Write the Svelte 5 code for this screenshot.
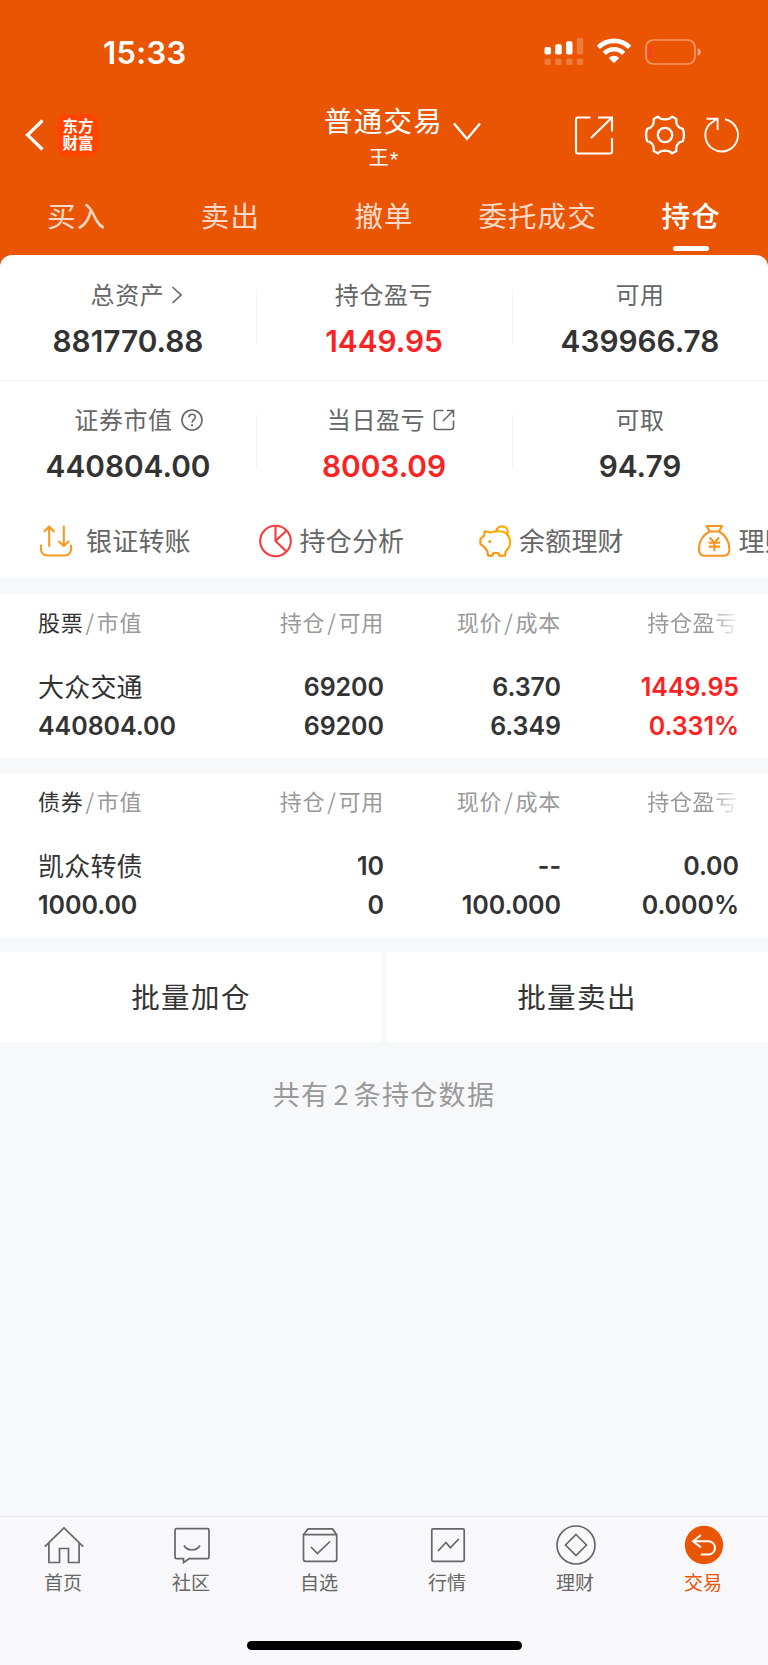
<script lang="ts">
    type Cell = { label: string; value: string; icon?: string; up?: boolean };
    type Holding = { name: string; rows: string[][]; up: boolean };

    const tabs = ['买入', '卖出', '撤单', '委托成交', '持仓'];
    let activeTab = $state(4);

    const summary: Cell[][] = [
        [
            { label: '总资产', value: '881770.88', icon: 'arrow' },
            { label: '持仓盈亏', value: '1449.95', up: true },
            { label: '可用', value: '439966.78' }
        ],
        [
            { label: '证券市值', value: '440804.00', icon: 'help' },
            { label: '当日盈亏', value: '8003.09', icon: 'open', up: true },
            { label: '可取', value: '94.79' }
        ]
    ];

    const shortcuts = [
        { icon: 'transfer', label: '银证转账' },
        { icon: 'pie', label: '持仓分析' },
        { icon: 'piggy', label: '余额理财' },
        { icon: 'bag', label: '理财' }
    ];

    const holdings: { kind: string; item: Holding }[] = [
        {
            kind: '股票',
            item: {
                name: '大众交通',
                rows: [['69200', '6.370', '1449.95'], ['440804.00', '69200', '6.349', '0.331%']],
                up: true
            }
        },
        {
            kind: '债券',
            item: {
                name: '凯众转债',
                rows: [['10', '--', '0.00'], ['1000.00', '0', '100.000', '0.000%']],
                up: false
            }
        }
    ];

    const nav = [
        { icon: 'home', label: '首页' },
        { icon: 'chat', label: '社区' },
        { icon: 'check', label: '自选' },
        { icon: 'chart', label: '行情' },
        { icon: 'coin', label: '理财' },
        { icon: 'trade', label: '交易' }
    ];
    let activeNav = $state(5);
</script>

<div class="screen">
    <header>
        <div class="status">
            <span class="time">15:33</span>
            <div class="indicators">
                <svg class="signal" width="40" height="28" viewBox="0 0 40 28" fill="#fff">
                    <rect x="0.5" y="9" width="6.5" height="7.5" rx="1.8" />
                    <rect x="11.2" y="6.3" width="6.5" height="10.2" rx="1.8" />
                    <rect x="22" y="3.3" width="6.5" height="13.2" rx="1.8" />
                    <g opacity="0.22">
                        <rect x="32.8" y="0" width="6.5" height="16.5" rx="1.8" />
                        <rect x="0.5" y="20.6" width="6.5" height="6.4" rx="2" />
                        <rect x="11.2" y="20.6" width="6.5" height="6.4" rx="2" />
                        <rect x="22" y="20.6" width="6.5" height="6.4" rx="2" />
                        <rect x="32.8" y="20.6" width="6.5" height="6.4" rx="2" />
                    </g>
                </svg>
                <svg class="wifi" width="36" height="26" viewBox="0 0 36 26" fill="none" stroke="#fff" stroke-width="4.6">
                    <path d="M2.4 9.4a22 22 0 0 1 31.2 0" />
                    <path d="M8.3 15.3a13.7 13.7 0 0 1 19.4 0" />
                    <path d="M18 25.3l-5.2-5.3a7.4 7.4 0 0 1 10.4 0z" fill="#fff" stroke="none" />
                </svg>
                <svg class="battery" width="56" height="26" viewBox="0 0 56 26" fill="none">
                    <rect x="1" y="1" width="49" height="24" rx="7.5" stroke="#fff" stroke-opacity="0.4" stroke-width="1.7" />
                    <rect x="4" y="7" width="2.6" height="12" rx="1" fill="#ff3b30" />
                    <path d="M52.6 9c2 .7 3.2 2.2 3.2 4s-1.2 3.3-3.2 4z" fill="#fff" fill-opacity="0.45" />
                </svg>
            </div>
        </div>

        <div class="titlebar">
            <div class="side">
                <svg width="20" height="32" viewBox="0 0 20 32" fill="none" stroke="#fff" stroke-width="3.2">
                    <path d="M18.5 1.5L3.5 16l15 14.5" />
                </svg>
                <div class="logo"><span>东方</span><span>财富</span></div>
            </div>
            <div class="account">
                <span class="account-type">普通交易</span>
                <span class="account-name">王<small>*</small></span>
                <svg class="account-arrow" width="28" height="20" viewBox="0 0 28 20" fill="none" stroke="#fff" stroke-width="2.4">
                    <path d="M1 1.5l13 15.5l13-15.5" />
                </svg>
            </div>
            <div class="side tools">
                <svg width="40" height="40" viewBox="0 0 40 40" fill="none" stroke="#fff" stroke-width="2.1">
                    <path d="M16.5 2.5H4a2 2 0 0 0-2 2v32a2 2 0 0 0 2 2h32a2 2 0 0 0 2-2V23M24 2.5h14v14M37.5 3L17 23" />
                </svg>
                <svg width="42" height="42" viewBox="0 0 42 42" fill="none" stroke="#fff" stroke-width="2.3" stroke-linejoin="round">
                    <path d="M14.2 2.6c2.5 3.6 11.1 3.6 13.6 0l4.6 2.4c-1 5.2 1.8 9 6.4 9.8c1.5 4 1.5 8.4 0 12.4c-4.600.8-7.400 4.600-6.400 9.800l-4.600 2.400c-2.500-3.600-11.100-3.600-13.600 0l-4.600-2.400c1-5.200-1.800-9-6.400-9.800c-1.500-4-1.500-8.400 0-12.400c4.600-.8 7.400-4.600 6.400-9.800z" />
                    <circle cx="21" cy="21" r="7.2" />
                </svg>
                <svg width="38" height="38" viewBox="0 0 38 38" fill="none" stroke="#fff" stroke-width="1.9">
                    <path d="M22 3.2A16.300 16.300 0 1 1 6.900 7.900L14 2.800M3.500 2.800H14.600V14" />
                </svg>
            </div>
        </div>

        <nav class="tabs">
            {#each tabs as tab, i}
                <button class="tab" class:active={i === activeTab} onclick={() => (activeTab = i)}>{tab}</button>
            {/each}
        </nav>
    </header>

    <section class="overview">
        {#each summary as row}
            <div class="summary-row">
                {#each row as cell}
                    <div class="summary-cell">
                        <div class="label {cell.icon ?? ''}">
                            <span>{cell.label}</span>
                            {#if cell.icon === 'arrow'}
                                <svg width="12" height="18" viewBox="0 0 12 18" fill="none" stroke="#666" stroke-width="1.7">
                                    <path d="M1.5 1l8.5 8l-8.5 8" />
                                </svg>
                            {:else if cell.icon === 'help'}
                                <svg width="22" height="22" viewBox="0 0 22 22" fill="none" stroke="#666" stroke-width="1.6">
                                    <circle cx="11" cy="11" r="10" />
                                    <path d="M7.9 8.5c0-4.300 6.400-4.300 6.400-.4c0 2.500-3.200 2.600-3.200 5.600" />
                                    <path d="M11.1 15.3v1.9" stroke-width="1.9" />
                                </svg>
                            {:else if cell.icon === 'open'}
                                <svg width="22" height="22" viewBox="0 0 22 22" fill="none" stroke="#666" stroke-width="1.6">
                                    <path d="M10.5 1.5H4A2.5 2.5 0 0 0 1.5 4v14A2.5 2.5 0 0 0 4 20.5h14a2.5 2.5 0 0 0 2.5-2.5V11.5M14 1.5h6.500V8M20.200 1.800L10 12" />
                                </svg>
                            {/if}
                        </div>
                        <div class="value" class:up={cell.up}>{cell.value}</div>
                    </div>
                {/each}
            </div>
        {/each}

        <div class="shortcuts">
            {#each shortcuts as item}
                <div class="shortcut">
                    <svg class={item.icon} width="34" height="34" viewBox="0 0 34 34" fill="none" stroke-width="2.1" stroke-linejoin="round">
                        {#if item.icon === 'transfer'}
                            <g stroke="#f59a23" stroke-linecap="round">
                                <path d="M2 21.5v4a6 6 0 0 0 6 6h18a6 6 0 0 0 6-6v-4" />
                                <path d="M10.2 22V2.8M5.500 7.300l4.700-4.800l4.700 4.800M24.800 2.500v19.200M20 17.400l4.800 4.600l4.800-4.600" />
                            </g>
                        {:else if item.icon === 'pie'}
                            <g stroke="#f93b3e">
                                <circle cx="16.5" cy="17" r="15.3" />
                                <path d="M16.5 1.500V17L27.800 6.200M16.500 17l10.800 10.500" />
                            </g>
                        {:else if item.icon === 'piggy'}
                            <g stroke="url(#piggyStroke)" transform="translate(1.200 .8) scale(.95)" stroke-width="2.300">
                                <path d="M8.500 7.100c1.400 0 2.300.4 3.400 1.100c2.400-.9 5.300-1.400 8.600-1.400c7.500 0 12 5 12 11.400c0 4.500-2 7.800-4.700 9.900l-.6 4.300H21l-.7-2.700h-5.400l-.8 2.700H9.400l-.8-4.500l-3-4.400l-4.300-3.200V15l3.800-3.600L5.800 7z" />
                                <path d="M18 6.800c1-7.300 12.500-6.700 12.200.8c0 1.600-.4 2.500-1.200 3.500" />
                                <circle cx="11.200" cy="17.500" r="1.600" fill="#f9a10c" stroke="none" />
                            </g>
                            <defs>
                                <linearGradient id="piggyStroke" x1="0" y1="1" x2="1" y2="0">
                                    <stop offset="0" stop-color="#f28a1b" />
                                    <stop offset="1" stop-color="#fdb900" />
                                </linearGradient>
                            </defs>
                        {:else}
                            <g stroke="#f7941d">
                                <path d="M8.700 2H24l-3 5.500h-9.300zM11.700 7.500C5.500 10.500 1 17 1 25c0 4.500 2 6.800 5.600 6.800h19.200c3.600 0 5.600-2.300 5.600-6.800c0-8-4.500-14.500-10.400-17.500" />
                                <path d="M11.700 13.500l4.700 5.200l4.700-5.200M10.700 18.700h11.400M10.700 22.600h11.400M16.400 18.700v8.500" />
                            </g>
                        {/if}
                    </svg>
                    <span>{item.label}</span>
                </div>
            {/each}
        </div>
    </section>

    {#each holdings as group}
        <section class="holding">
            <div class="holding-head">
                <span><b>{group.kind}</b><i>/</i>市值</span>
                <span>持仓<i>/</i>可用</span>
                <span>现价<i>/</i>成本</span>
                <span class="faded">持仓盈亏</span>
            </div>
            <div class="holding-row">
                <span class="name">{group.item.name}</span>
                {#each group.item.rows[0] as text, i}
                    <span class:up={group.item.up && i === 2}>{text}</span>
                {/each}
            </div>
            <div class="holding-row">
                {#each group.item.rows[1] as text, i}
                    <span class:up={group.item.up && i === 3}>{text}</span>
                {/each}
            </div>
        </section>
    {/each}

    <div class="batch">
        <button>批量加仓</button>
        <button>批量卖出</button>
    </div>

    <p class="count">共有<em>2</em>条持仓数据</p>

    <footer>
        <nav class="bottom-nav">
            {#each nav as item, i}
                <button class="nav-item" class:active={i === activeNav} onclick={() => (activeNav = i)}>
                    <svg width="40" height="40" viewBox="0 0 40 40" fill="none" stroke="#666" stroke-width="1.7">
                        {#if item.icon === 'home'}
                            <path d="M.8 21.7L20 3l19.200 18.700M4.900 18v19.500h10.600V23.500h9V37.500h10.600V18" />
                        {:else if item.icon === 'chat'}
                            <path d="M4.500 3.700h31a1.500 1.500 0 0 1 1.500 1.500v27a1.500 1.500 0 0 1-1.500 1.500H17l-5.500 4v-4h-7A1.500 1.500 0 0 1 3 32.200v-27a1.500 1.500 0 0 1 1.500-1.500zM12 20.500c3.800 6 12.200 6 16 0" />
                        {:else if item.icon === 'check'}
                            <path d="M3.500 9.700L8 3.900h24.500L36.700 9.700M3.500 9.700h33.200v24.600a2 2 0 0 1-2 2H5.500a2 2 0 0 1-2-2zM11 22l6.400 6.500L30 16.500" />
                        {:else if item.icon === 'chart'}
                            <rect x="3.8" y="3.9" width="32.4" height="32.4" rx="1.2" />
                            <path d="M10 26l8-8.500l4.300 5.300L30.800 14" />
                        {:else if item.icon === 'coin'}
                            <circle cx="20" cy="20" r="19" />
                            <path d="M20 9.500L30.500 20L20 30.500L9.500 20z" />
                        {:else}
                            <circle cx="20" cy="20" r="19.2" fill="#ea5504" stroke="none" />
                            <path d="M17 10l-8 6.200l8 6.200M9 16.200h15.300a6.700 6.700 0 0 1 0 13.400h-7.500" stroke="#fff" stroke-width="2" />
                        {/if}
                    </svg>
                    <span>{item.label}</span>
                </button>
            {/each}
        </nav>
        <div class="home-indicator"></div>
    </footer>
</div>

<style>
    :global(body) {
        background: #f7f8fa;
    }

    .screen {
        width: 768px;
        height: 1665px;
        display: flex;
        flex-direction: column;
        overflow: hidden;
        background: #f7f8fa;
        color: #333;
        font-family: 'Noto Sans CJK SC', sans-serif;
    }

    svg {
        display: block;
        flex-shrink: 0;
    }

    button {
        border: 0;
        padding: 0;
        background: none;
        color: inherit;
        font: inherit;
    }

    header {
        height: 270px;
        flex-shrink: 0;
        background: #ea5504;
        color: #fff;
    }

    .status {
        height: 104px;
        box-sizing: border-box;
        padding: 38px 67px 0 103px;
        display: flex;
        justify-content: space-between;
    }

    .time {
        font: 600 31px/30px Inter, sans-serif;
        letter-spacing: 0.3px;
    }

    .indicators {
        display: flex;
    }

    .wifi {
        margin: 0 13px 0 12px;
    }

    .battery {
        margin-top: 1px;
    }

    .titlebar {
        height: 84px;
        box-sizing: border-box;
        padding: 0 27px 0 24px;
        display: grid;
        grid-template-columns: 1fr auto 1fr;
    }

    .side {
        display: flex;
        align-items: center;
        height: 62px;
    }

    .tools {
        justify-content: flex-end;
    }

    .tools svg:nth-child(2) {
        margin: 0 17px 0 30px;
    }

    .logo {
        width: 42px;
        height: 42px;
        margin-left: 13px;
        padding-bottom: 2px;
        box-sizing: border-box;
        display: flex;
        flex-direction: column;
        align-items: center;
        justify-content: center;
        border-radius: 9px;
        background: #ff4400;
        font-size: 15.5px;
        line-height: 17.5px;
        font-weight: 700;
    }

    .account {
        position: relative;
        display: flex;
        flex-direction: column;
        align-items: center;
        padding-left: 2px;
    }

    .account-type {
        font-size: 28.5px;
        line-height: 32px;
        letter-spacing: 1.3px;
    }

    .account-name {
        margin-top: 8px;
        font-size: 20px;
        line-height: 26px;
    }

    .account-name small {
        margin-left: 1px;
        font: 22px/20px 'Liberation Sans', sans-serif;
        vertical-align: -2px;
    }

    .account-arrow {
        position: absolute;
        left: 131px;
        top: 18px;
    }

    .tabs {
        display: flex;
        height: 67px;
    }

    .tab {
        position: relative;
        flex: 1;
        height: 56px;
        padding-bottom: 4px;
        font-size: 28.5px;
        letter-spacing: 1.1px;
        color: rgba(255, 255, 255, 0.8);
    }

    .tab.active {
        color: #fff;
        font-weight: 500;
    }

    .tab.active::after {
        content: '';
        position: absolute;
        left: 50%;
        bottom: -7px;
        width: 36px;
        height: 5px;
        margin-left: -18px;
        border-radius: 3px;
        background: #fff;
    }

    .overview {
        height: 322px;
        margin-top: -15px;
        flex-shrink: 0;
        overflow: hidden;
        border-radius: 12px 12px 0 0;
        background: #fff;
    }

    .summary-row {
        display: flex;
        height: 124px;
        box-sizing: border-box;
        padding-top: 23px;
    }

    .summary-row:first-child {
        height: 126px;
        padding-top: 24px;
        border-bottom: 1px solid #f2f3f4;
    }

    .summary-cell {
        position: relative;
        width: 256px;
    }

    .summary-cell + .summary-cell::before {
        content: '';
        position: absolute;
        left: 0;
        top: 11px;
        width: 1px;
        height: 54px;
        background: #f2f2f3;
    }

    .label {
        display: flex;
        align-items: center;
        justify-content: center;
        gap: 8px;
        height: 32px;
        font-size: 24px;
        letter-spacing: 0.6px;
        color: #666;
    }

    .label span {
        line-height: 30px;
        padding-bottom: 2px;
    }

    .label.arrow {
        gap: 7px;
        padding-left: 18px;
    }

    .label.help {
        padding-left: 21px;
    }

    .label.open {
        padding-left: 14px;
    }

    .value {
        margin-top: 12px;
        text-align: center;
        font: 600 29.8px/36px Inter, sans-serif;
    }

    .summary-row:last-child .summary-cell:last-child {
        padding-left: 2px;
    }

    .up {
        color: #fa2323;
    }

    .shortcuts {
        display: flex;
        height: 72px;
        padding-left: 39px;
    }

    .shortcut {
        display: flex;
        align-items: center;
        flex-shrink: 0;
        gap: 7px;
        width: 219.5px;
        font-size: 26px;
        letter-spacing: 0.2px;
        color: #666;
        white-space: nowrap;
    }

    .shortcut span {
        padding-bottom: 4px;
    }

    .transfer {
        margin-right: 6px;
    }

    .holding {
        height: 164px;
        flex-shrink: 0;
        margin-top: 15px;
        background: #fff;
    }

    .overview + .holding {
        margin-top: 17px;
    }

    .holding-head,
    .holding-row {
        display: grid;
        grid-template-columns: 169px 177px 177px 178px;
        padding-left: 38px;
        text-align: right;
    }

    .holding-head span:first-child,
    .holding-row span:first-child {
        text-align: left;
    }

    .holding-head {
        height: 74px;
        line-height: 54px;
        font-size: 22px;
        letter-spacing: 0.7px;
        color: #999;
    }

    .holding-head b {
        font-weight: 400;
        color: #333;
    }

    .holding-head i {
        margin: 0 2px;
        font-style: normal;
    }

    .holding-head .faded {
        padding-right: 1px;
        -webkit-mask-image: linear-gradient(90deg, #000 84%, transparent 101%);
        mask-image: linear-gradient(90deg, #000 84%, transparent 101%);
    }

    .holding-row {
        height: 39px;
        font: 600 25px/39px Inter, sans-serif;
        letter-spacing: -0.05px;
    }

    .holding-row .name {
        font: 400 26px/36px 'Noto Sans CJK SC', sans-serif;
        letter-spacing: 0.2px;
    }

    .batch {
        display: flex;
        flex-shrink: 0;
        gap: 4px;
        height: 90px;
        margin-top: 15px;
    }

    .batch button {
        flex: 1;
        padding-bottom: 3px;
        background: #fff;
        font-size: 28.5px;
        letter-spacing: 1.4px;
    }

    .count {
        margin: 33px 0 0;
        text-align: center;
        font-size: 27px;
        line-height: 38px;
        letter-spacing: 1.3px;
        color: #999;
    }

    .count em {
        margin: 0 4px;
        font-style: normal;
    }

    footer {
        height: 149px;
        margin-top: auto;
        box-sizing: border-box;
        border-top: 1px solid #e8e9eb;
        background: #f8f8fb;
    }

    .bottom-nav {
        display: flex;
    }

    .nav-item {
        flex: 1;
        height: 124px;
        padding-top: 8px;
        display: flex;
        flex-direction: column;
        align-items: center;
        box-sizing: border-box;
        font-size: 19px;
        line-height: 28px;
        color: #666;
    }

    .nav-item span {
        margin: 3px 2px 0 0;
    }

    .nav-item.active {
        color: #ea5504;
    }

    .home-indicator {
        width: 275px;
        height: 9px;
        margin: 0 auto;
        border-radius: 5px;
        background: #000;
    }
</style>
